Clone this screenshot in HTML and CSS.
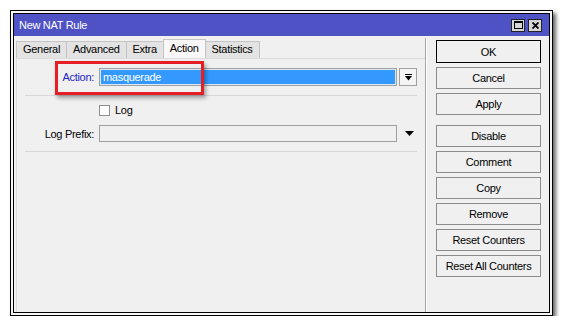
FILE: index.html
```html
<!DOCTYPE html>
<html lang="en">
<head>
    <meta charset="UTF-8">
    <title>New NAT Rule</title>
    <link rel="stylesheet" href="styles.css">
</head>
<body>
    <div class="window">
        <div class="frame">
            <div class="titlebar">
                <span class="title">New NAT Rule</span>
                <div class="win-buttons">
                    <span class="win-btn max"><span class="max-box"></span></span>
                    <span class="win-btn close">
                        <svg width="7" height="7" viewBox="0 0 7 7"><path d="M0.5 0.5 L6.5 6.5 M6.5 0.5 L0.5 6.5" stroke="#000" stroke-width="1.8"/></svg>
                    </span>
                </div>
            </div>
            <div class="client">
                <div class="main">
                    <div class="tabs">
                        <span class="tab">General</span>
                        <span class="tab">Advanced</span>
                        <span class="tab">Extra</span>
                        <span class="tab active">Action</span>
                        <span class="tab">Statistics</span>
                    </div>
                    <div class="page">
                        <div class="row action-row">
                            <label class="label blue">Action:</label>
                            <div class="field selected">masquerade</div>
                            <div class="dd-btn">
                                <svg width="7" height="7" viewBox="0 0 7 7"><rect x="0" y="0" width="7" height="1" fill="#000"/><path d="M0 2 H7 L3.5 6.5 Z" fill="#000"/></svg>
                            </div>
                        </div>
                        <div class="sep"></div>
                        <div class="check-row">
                            <span class="checkbox"></span>
                            <span>Log</span>
                        </div>
                        <div class="row prefix-row">
                            <label class="label">Log Prefix:</label>
                            <div class="field"></div>
                            <div class="dd-arrow">
                                <svg width="9" height="5" viewBox="0 0 9 5"><path d="M0 0 H9 L4.5 5 Z" fill="#000"/></svg>
                            </div>
                        </div>
                        <div class="sep"></div>
                        <div class="highlight"></div>
                    </div>
                </div>
                <div class="divider"></div>
                <div class="side">
                    <button class="btn default">OK</button>
                    <button class="btn">Cancel</button>
                    <button class="btn">Apply</button>
                    <button class="btn group">Disable</button>
                    <button class="btn">Comment</button>
                    <button class="btn">Copy</button>
                    <button class="btn">Remove</button>
                    <button class="btn">Reset Counters</button>
                    <button class="btn">Reset All Counters</button>
                </div>
            </div>
        </div>
    </div>
</body>
</html>
```

FILE: styles.css
```css
:root {
    --bg: #f0f0f0;
    --title: #4e52c4;
    --border: #a0a0a0;
    --select: #3399ff;
    --red: #e61e25;
}

* {
    box-sizing: border-box;
}

body {
    margin: 0;
    background: #fff;
    font-family: "Liberation Sans", Arial, sans-serif;
    font-size: 11px;
    letter-spacing: -0.3px;
    color: #000;
}

/* window frame: double black line */
.window {
    margin: 10px 0 0 10px;
    width: 543px;
    height: 306px;
    border: 1px solid #000;
    padding: 2px;
    background: #f6f6f6;
    box-shadow: 3px 3px 4px rgba(0,0,0,0.6);
}

.frame {
    height: 100%;
    border: 1px solid #000;
    display: flex;
    flex-direction: column;
    background: var(--bg);
}

.titlebar {
    height: 22px;
    background: var(--title);
    color: #fff;
    display: flex;
    align-items: center;
    justify-content: space-between;
    padding: 0 7px 0 5px;
}

.win-buttons {
    display: flex;
    gap: 3px;
}

.win-btn {
    width: 14px;
    height: 13px;
    background: #d6d6d6;
    border: 1px solid #222;
    display: flex;
    align-items: center;
    justify-content: center;
}

.max-box {
    width: 9px;
    height: 8px;
    border: 1px solid #000;
    border-top-width: 2px;
}

.client {
    flex: 1;
    display: flex;
}

.main {
    width: 411px;
    display: flex;
    flex-direction: column;
}

.tabs {
    height: 22px;
    display: flex;
    align-items: flex-end;
    padding-left: 2px;
}

.tab {
    height: 17px;
    padding: 0 6px;
    line-height: 15px;
    background: #e3e3e3;
    border: 1px solid #c4c4c4;
    border-bottom: none;
    margin-right: -1px;
}

.tab.active {
    height: 19px;
    line-height: 16px;
    background: #f8f8f8;
    position: relative;
    z-index: 1;
}

.page {
    flex: 1;
    position: relative;
    margin-left: 2px;
    border-left: 1px solid #dcdcdc;
    border-top: 1px solid #dcdcdc;
}

.row {
    display: flex;
    align-items: center;
    padding-right: 8px;
}

.action-row {
    margin-top: 9px;
    height: 18px;
}

.prefix-row {
    margin-top: 9px;
    height: 17px;
}

.label {
    width: 77px;
    margin-right: 5px;
    text-align: right;
}

.label.blue {
    color: #2323c8;
}

.field {
    flex: 1;
    height: 100%;
    border: 1px solid var(--border);
    background: var(--bg);
}

.field.selected {
    background: var(--select);
    color: #fff;
    box-shadow: inset 0 0 0 1px #dbe9f7;
    padding: 1px 3px;
    line-height: 14px;
}

.dd-btn {
    width: 18px;
    height: 18px;
    margin-left: 2px;
    border: 1px solid var(--border);
    background: #f4f4f4;
    display: flex;
    align-items: center;
    justify-content: center;
}

.dd-arrow {
    width: 18px;
    margin-left: 2px;
    display: flex;
    justify-content: center;
    padding-left: 3px;
}

.sep {
    height: 1px;
    margin: 9px 8px 0 8px;
    background: #d8d8d8;
}

.check-row {
    display: flex;
    align-items: center;
    gap: 5px;
    margin: 8px 0 0 82px;
    height: 12px;
}

.checkbox {
    width: 11px;
    height: 11px;
    background: #fff;
    border: 1px solid #8f8f8f;
}

/* red annotation box over the Action row */
.highlight {
    position: absolute;
    left: 38px;
    top: 2px;
    width: 149px;
    height: 34px;
    border: 3px solid var(--red);
    box-shadow: 2px 3px 4px rgba(0,0,0,0.35);
}

.divider {
    width: 1px;
    margin-top: 2px;
    background: #a4a4a4;
    box-shadow: 1px 0 0 #fff;
}

.side {
    flex: 1;
    display: flex;
    flex-direction: column;
    padding: 4px 8px 0 10px;
}

.btn {
    width: 105px;
    height: 22px;
    margin: 0 0 4px 0;
    padding: 0;
    border: 1px solid #8c8c8c;
    background: var(--bg);
    font-family: inherit;
    font-size: 11px;
    letter-spacing: -0.3px;
    color: #000;
}

.btn.default {
    height: 23px;
    border-color: #000;
}

.btn.group {
    margin-top: 6px;
}
```
